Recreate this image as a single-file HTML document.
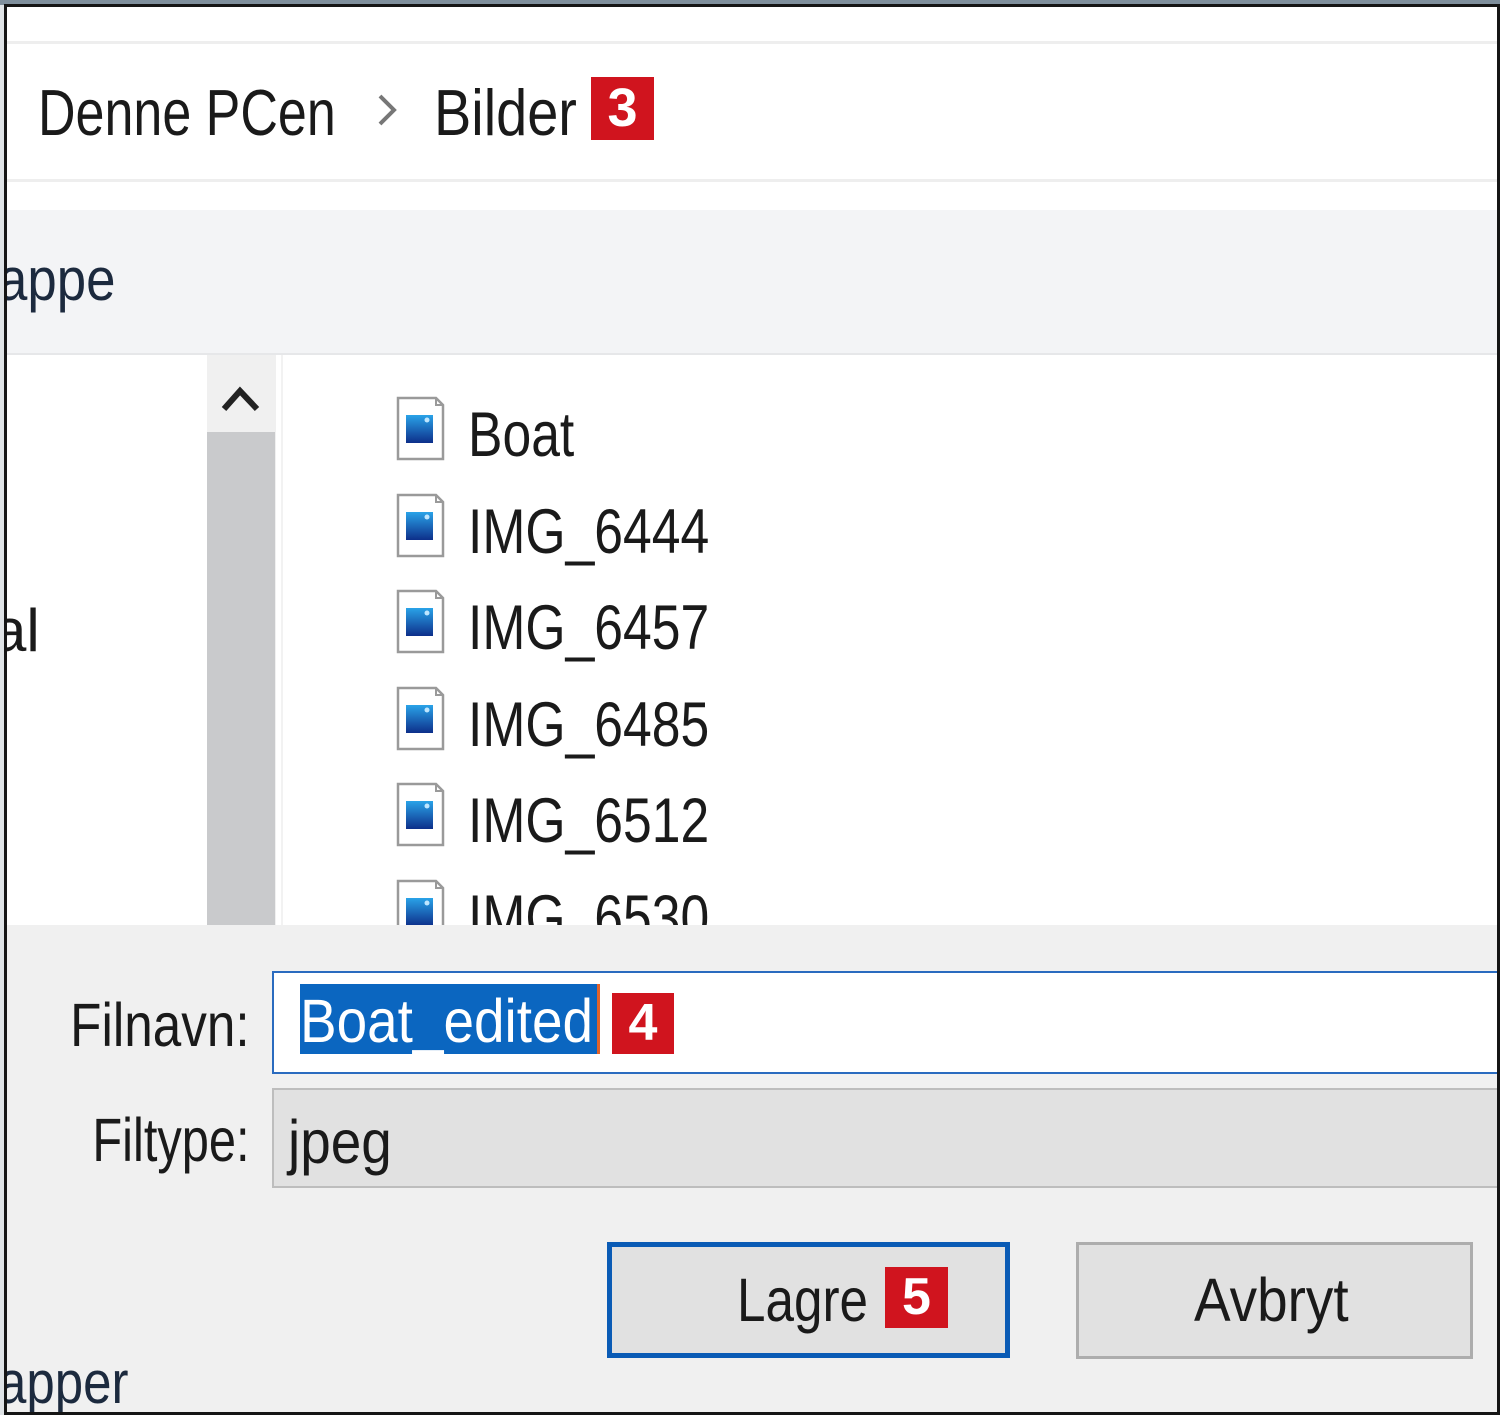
<!DOCTYPE html>
<html><head><meta charset="utf-8"><style>
html,body{margin:0;padding:0;}
body{width:1500px;height:1415px;position:relative;overflow:hidden;background:#dfe3e6;font-family:"Liberation Sans",sans-serif;}
.a{position:absolute;}
.t{position:absolute;white-space:nowrap;line-height:1;transform-origin:left center;color:#1a1a1a;}
.badge{position:absolute;background:#d0141e;color:#fff;font-weight:bold;text-align:center;font-family:"Liberation Sans",sans-serif;}
</style></head><body>
<div class="a" style="left:0;top:0;width:1500px;height:5px;background:#7f8f9c"></div>
<div class="a" style="left:4px;top:4px;width:1490px;height:1405px;border:3px solid #151515;background:#fff;overflow:hidden">
  <div class="a" style="left:0;top:34px;width:1490px;height:3px;background:#eeeeee"></div>
  <div class="a" style="left:0;top:172px;width:1490px;height:3px;background:#eeeeee"></div>
  <div class="t" style="left:31px;top:73px;font-size:65px;transform:scaleX(0.8)">Denne PCen</div>
  <svg class="a" style="left:365px;top:83px" width="30" height="40"><path d="M8 6 L22 20 L8 34" fill="none" stroke="#777" stroke-width="4"/></svg>
  <div class="t" style="left:427px;top:73px;font-size:65px;transform:scaleX(0.86)">Bilder</div>
  <div class="badge" style="left:584px;top:70px;width:63px;height:63px;font-size:54px;line-height:63px">3</div>
  <div class="a" style="left:0;top:203px;width:1490px;height:145px;background:#f3f4f6"></div>
  <div class="t" style="left:-9px;top:243px;font-size:60px;transform:scaleX(0.88);color:#1c2a3e">appe</div>
  <div class="a" style="left:0;top:346px;width:1490px;height:2px;background:#e6e7e9"></div>
  <div class="t" style="left:-14px;top:594px;font-size:60px;color:#1a1a1a">al</div>
  <div class="a" style="left:200px;top:348px;width:69px;height:570px;background:#f0f0f0"></div>
  <div class="a" style="left:200px;top:425px;width:68px;height:493px;background:#c9cacc"></div>
  <svg class="a" style="left:210px;top:368px" width="50" height="40"><path d="M7 34 L23 16 L40 34" fill="none" stroke="#222" stroke-width="6"/></svg>
  <div class="a" style="left:274px;top:348px;width:2px;height:570px;background:#f2f2f2"></div>
  <div id="files"></div>
  <div class="a" style="left:0;top:918px;width:1490px;height:490px;background:#f0f0f0"></div>
  <div class="t" style="right:1247px;top:988px;font-size:61px;transform:scaleX(0.84);transform-origin:right center">Filnavn:</div>
  <div class="a" style="left:265px;top:964px;width:1230px;height:99px;border:2px solid #2a6bbf;background:#fff"></div>
  <div class="a" style="left:293px;top:977px;width:297px;height:70px;background:#0b66c0"></div>
  <div class="t" style="left:293px;top:984px;font-size:61px;transform:scaleX(0.9);color:#fff">Boat_edited</div>
  <div class="a" style="left:590px;top:977px;width:3px;height:70px;background:#e2622a"></div>
  <div class="badge" style="left:605px;top:986px;width:62px;height:61px;font-size:52px;line-height:61px">4</div>
  <div class="t" style="right:1247px;top:1103px;font-size:61px;transform:scaleX(0.8);transform-origin:right center">Filtype:</div>
  <div class="a" style="left:265px;top:1081px;width:1230px;height:96px;border:2px solid #bdbdbd;background:#e1e1e1"></div>
  <div class="t" style="left:281px;top:1105px;font-size:61px;transform:scaleX(0.9)">jpeg</div>
  <div class="a" style="left:600px;top:1235px;width:393px;height:106px;border:5px solid #0a5bb5;background:#e1e1e1"></div>
  <div class="t" style="left:730px;top:1263px;font-size:61px;transform:scaleX(0.84)">Lagre</div>
  <div class="badge" style="left:878px;top:1260px;width:63px;height:61px;font-size:52px;line-height:61px">5</div>
  <div class="a" style="left:1069px;top:1235px;width:391px;height:111px;border:3px solid #adadad;background:#e1e1e1"></div>
  <div class="t" style="left:1187px;top:1263px;font-size:61px;transform:scaleX(0.9)">Avbryt</div>
  <div class="t" style="left:-9px;top:1346px;font-size:60px;transform:scaleX(0.85);color:#1c2a3e">apper</div>
</div>
<script>
var names=["Boat","IMG_6444","IMG_6457","IMG_6485","IMG_6512","IMG_6530"];
var h="";
for(var i=0;i<names.length;i++){
 var y=389+i*96.5;
 h+='<svg class="a" style="left:389px;top:'+y+'px" width="50" height="66"><path d="M2 2 H40 L47 9 V63 H2 Z" fill="#fff" stroke="#9a9a9a" stroke-width="2.5"/><path d="M40 2 V9 H47" fill="none" stroke="#9a9a9a" stroke-width="2"/><defs><linearGradient id="g'+i+'" x1="0" y1="0" x2="0" y2="1"><stop offset="0" stop-color="#2aa3e8"/><stop offset="1" stop-color="#0d2f8a"/></linearGradient></defs><rect x="10" y="19" width="27" height="28" fill="url(#g'+i+')"/><circle cx="31" cy="24" r="2.5" fill="#bfe6ff"/></svg>';
 h+='<div class="t" style="left:461px;top:'+(y+8)+'px;font-size:63px;transform:scaleX(0.82)">'+names[i]+'</div>';
}
document.getElementById("files").outerHTML=h;
</script>
</body></html>
